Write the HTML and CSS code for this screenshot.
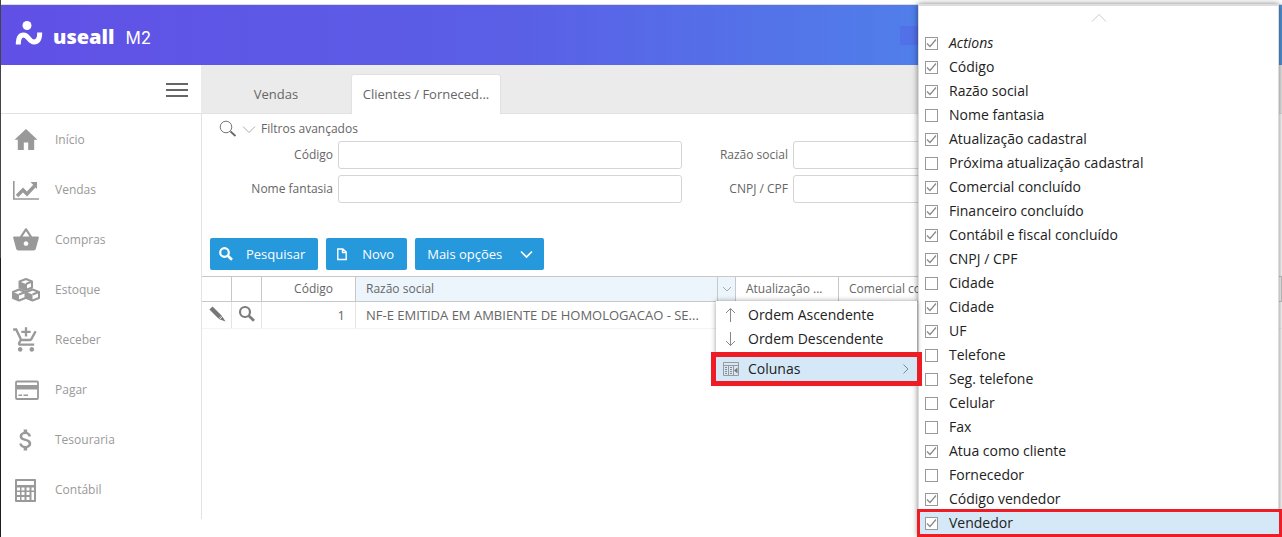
FILE: index.html
```html
<!DOCTYPE html>
<html lang="pt-BR">
<head>
<meta charset="utf-8">
<title>Useall M2 - Clientes / Fornecedores</title>
<link rel="stylesheet" href="styles.css">
</head>
<body>
<header class="topbar">
  <a class="brand" href="#">
    <svg class="brand-mark" viewBox="0 0 28 26" width="28" height="26" aria-hidden="true">
      <circle cx="12" cy="5.500" r="4.500" fill="#fff"/>
      <path d="M3.300 24.500c0-6 1.700-9.500 5.200-9.500 5 0 5.500 7 10.500 7 4 0 5.700-3 5.700-9.500" fill="none" stroke="#fff" stroke-width="5"/>
    </svg>
    <span class="brand-name">useall</span>
    <span class="brand-edition">M2</span>
  </a>
  <button class="topbar-menu" type="button" aria-label="Opções"></button>
</header>

<div class="shell">
  <aside class="sidebar">
    <div class="sidebar-head">
      <button class="toggle" type="button" aria-label="Menu"><span></span><span></span><span></span></button>
    </div>
    <nav class="nav">
      <a href="#"><svg viewBox="0 0 28 28"><path fill="currentColor" d="M14 3 2.500 13.800h3.300V24h6v-7.500h4.400V24h6V13.800h3.300z"/></svg>Início</a>
      <a href="#"><svg viewBox="0 0 28 28"><path fill="none" stroke="currentColor" stroke-width="1.600" d="M1.800 5v18H27"/><path fill="none" stroke="currentColor" stroke-width="3.400" d="M5 20l6-6 4 4 7.500-8"/><path fill="currentColor" d="M18.500 6H25v7z"/></svg>Vendas</a>
      <a href="#"><svg viewBox="0 0 24 24"><path fill="currentColor" d="M17.210 9l-4.380-6.560c-.190-.280-.510-.420-.830-.420-.320 0-.640.140-.830.430L6.790 9H2c-.550 0-1 .450-1 1 0 .090.010.180.040.270l2.540 9.270c.230.840 1 1.460 1.920 1.460h13c.920 0 1.690-.620 1.930-1.460l2.540-9.270L23 10c0-.550-.450-1-1-1h-4.790zM9 9l3-4.400L15 9H9zm3 8c-1.100 0-2-.900-2-2s.900-2 2-2 2 .900 2 2-.900 2-2 2z"/></svg>Compras</a>
      <a href="#"><svg viewBox="0 0 28 28"><g fill="#fff" stroke="currentColor" stroke-width="2" stroke-linejoin="round"><path d="M7.500 5.500 14 3l6 2.500v6L14 14l-6.500-2.500z"/><path d="M1 16l6-2.500 6.500 2.500v6L7 24.500 1 22z"/><path d="M14.500 16l6-2.500L27 16v6l-6.500 2.500-6-2.500z"/></g><path fill="currentColor" d="M7.500 5.500 14 8v6l-6.500-2.500zM1 16l6 2.500v6L1 22zM14.500 16l6 2.500v6l-6-2.500z"/><path fill="none" stroke="currentColor" stroke-width="2" d="M14 8v6M7 18.500l6.500-2.500M20.500 18.500 27 16M14 8l6-2.500"/></svg>Estoque</a>
      <a href="#"><svg viewBox="0 0 24 24"><path fill="currentColor" d="M11 9h2V6h3V4h-3V1h-2v3H8v2h3v3zm-4 9c-1.100 0-1.990.900-1.990 2S5.900 22 7 22s2-.900 2-2-.900-2-2-2zm10 0c-1.100 0-1.990.900-1.990 2s.890 2 1.990 2 2-.900 2-2-.900-2-2-2zm-9.830-3.250l.030-.120.900-1.630h7.450c.750 0 1.410-.410 1.750-1.030l3.860-7.010L19.420 4h-.010l-1.100 2-2.760 5H8.530l-.130-.270L6.160 6l-.950-2-.940-2H1v2h2l3.600 7.590-1.350 2.450c-.160.280-.250.610-.250.960 0 1.100.900 2 2 2h12v-2H7.420c-.130 0-.250-.110-.250-.250z"/></svg>Receber</a>
      <a href="#"><svg viewBox="0 0 28 28"><rect x="4" y="5.500" width="22" height="17.500" rx="1" fill="none" stroke="currentColor" stroke-width="1.800"/><path fill="currentColor" d="M4 9h22v4.500H4zM6.500 18.500h3.500v1.500H6.500zM11.500 18.500H16v1.500h-4.500z"/></svg>Pagar</a>
      <a href="#"><svg viewBox="0 0 24 24"><path fill="currentColor" d="M11.800 10.900c-2.270-.590-3-1.200-3-2.150 0-1.090 1.010-1.850 2.700-1.850 1.780 0 2.440.850 2.500 2.100h2.210c-.070-1.720-1.120-3.300-3.210-3.810V3h-3v2.160c-1.940.420-3.500 1.680-3.500 3.610 0 2.310 1.910 3.460 4.700 4.130 2.500.600 3 1.480 3 2.410 0 .690-.490 1.790-2.700 1.790-2.060 0-2.870-.920-2.980-2.100h-2.200c.120 2.190 1.760 3.420 3.680 3.830V21h3v-2.150c1.950-.370 3.500-1.500 3.500-3.550 0-2.840-2.430-3.810-4.700-4.400z"/></svg>Tesouraria</a>
      <a href="#"><svg viewBox="0 0 28 28"><path fill="currentColor" fill-rule="evenodd" d="M4 3h19q1 0 1 1v21q0 1-1 1H4q-1 0-1-1V4q0-1 1-1zm1 2v4h17V5zm0 6.500v3h3v-3zm4.500 0v3h3v-3zm5 0v3h3v-3zm5 0v3H22v-3zM5 16v3h3v-3zm4.500 0v3h3v-3zm5 0v3h3v-3zm5 0v8H22v-8zM5 21v3h3v-3zm4.500 0v3h3v-3zm5 0v3h3v-3z"/></svg>Contábil</a>
    </nav>
  </aside>

  <main class="main">
    <div class="tabs" role="tablist">
      <button class="tab" role="tab" type="button">Vendas</button>
      <button class="tab active" role="tab" type="button" aria-selected="true">Clientes / Forneced...</button>
    </div>

    <section class="content">
      <div class="filters-head">
        <svg width="18" height="18" viewBox="0 0 18 18"><circle cx="7" cy="7" r="5.800" fill="none" stroke="#777"/><path d="M11.500 11.500l5 4.500" stroke="#666" stroke-width="1.700"/></svg>
        <svg width="14" height="18" viewBox="0 0 14 18"><path d="M1 6.500l6 6 6-6" fill="none" stroke="#aaa"/></svg>
        <span>Filtros avançados</span>
      </div>
      <form class="filters">
        <label for="codigo">Código</label><input id="codigo" type="text">
        <label for="razao">Razão social</label><input id="razao" type="text">
        <label for="fantasia">Nome fantasia</label><input id="fantasia" type="text">
        <label for="cnpj">CNPJ / CPF</label><input id="cnpj" type="text">
      </form>

      <div class="actions">
        <button class="btn" type="button"><svg width="16" height="16" viewBox="0 0 16 16"><circle cx="6.500" cy="6.500" r="4.300" fill="none" stroke="#fff" stroke-width="2.200"/><path d="M9.800 9.800l4.200 4" stroke="#fff" stroke-width="2.600"/></svg>Pesquisar</button>
        <button class="btn" type="button"><svg width="16" height="16" viewBox="0 0 16 16"><path d="M3.800 3h5L12.200 6v7.500H3.800zM8.500 3v3.500h3.500" fill="none" stroke="#fff" stroke-width="1.400"/></svg>Novo</button>
        <button class="btn more-options" type="button">Mais opções<svg width="16" height="16" viewBox="0 0 16 16"><path d="M3 5.500l5.500 5.500L14 5.500" fill="none" stroke="#fff" stroke-width="1.700"/></svg></button>
      </div>

      <table class="grid">
        <colgroup><col class="c-icon"><col class="c-icon"><col class="c-code"><col class="c-name"><col class="c-update"><col></colgroup>
        <thead>
          <tr>
            <th></th><th></th><th class="num">Código</th>
            <th class="sorted">
              <div class="th-inner">
                <span>Razão social</span>
                <button class="trigger" type="button" aria-label="Menu da coluna"><svg width="10" height="8" viewBox="0 0 10 8"><path d="M1 2l4 4 4-4" fill="none" stroke="#aaa"/></svg></button>
              </div>
              <div class="menu" role="menu">
                <button type="button" role="menuitem"><svg width="16" height="16" viewBox="0 0 16 16"><path d="M7.500 15V1.500M3 6l4.500-4.500L12 6" fill="none" stroke="#888"/></svg>Ordem Ascendente</button>
                <button type="button" role="menuitem"><svg width="16" height="16" viewBox="0 0 16 16"><path d="M7.500 1v13.500M3 10l4.500 4.500L12 10" fill="none" stroke="#888"/></svg>Ordem Descendente</button>
                <hr>
                <button class="marked" type="button" role="menuitem"><svg width="16" height="16" viewBox="0 0 16 16"><path d="M.5 1.500h15v13H.5zM.5 4.500h15M5.500 4.500v10M10.500 4.500v10" fill="none" stroke="#999"/><path d="M2 6.500h2M2 8.500h2M2 10.500h2M2 12.500h2M7 6.500h2M7 8.500h2M7 10.500h2M7 12.500h2" stroke="#888"/><path d="M14.500 6.500v6l-3.500-3z" fill="#777"/></svg>Colunas<svg class="more" width="8" height="12" viewBox="0 0 8 12"><path d="M1.500 1.500 6 6l-4.500 4.500" fill="none" stroke="#888"/></svg></button>
              </div>
            </th>
            <th>Atualização ...</th><th>Comercial concluído</th>
          </tr>
        </thead>
        <tbody>
          <tr>
            <td class="tool"><button type="button" aria-label="Editar"><svg width="20" height="20" viewBox="0 0 20 20"><path d="M4 4l9 9" stroke="#777" stroke-width="4.500"/><path d="M14.800 11.500l3.700 6-7-2.500z" fill="#777"/><path d="M12.500 15.500l3.500-3.500" stroke="#fff" stroke-width=".8"/></svg></button></td>
            <td class="tool"><button type="button" aria-label="Visualizar"><svg width="20" height="20" viewBox="0 0 20 20"><circle cx="8" cy="8" r="5" fill="none" stroke="#7d7d7d" stroke-width="2.200"/><path d="M11.800 11.800l5.200 5" stroke="#7d7d7d" stroke-width="2.800"/></svg></button></td>
            <td class="num">1</td>
            <td class="name">NF-E EMITIDA EM AMBIENTE DE HOMOLOGACAO - SE...</td>
            <td></td><td></td>
          </tr>
        </tbody>
      </table>
    </section>
  </main>
</div>

<div class="columns">
  <svg class="scroll-up" width="16" height="10" viewBox="0 0 16 10"><path d="M1 8.500l7-7 7 7" fill="none" stroke="#ccc"/></svg>
  <label><input type="checkbox" checked><em>Actions</em></label>
  <label><input type="checkbox" checked>Código</label>
  <label><input type="checkbox" checked>Razão social</label>
  <label><input type="checkbox">Nome fantasia</label>
  <label><input type="checkbox" checked>Atualização cadastral</label>
  <label><input type="checkbox">Próxima atualização cadastral</label>
  <label><input type="checkbox" checked>Comercial concluído</label>
  <label><input type="checkbox" checked>Financeiro concluído</label>
  <label><input type="checkbox" checked>Contábil e fiscal concluído</label>
  <label><input type="checkbox" checked>CNPJ / CPF</label>
  <label><input type="checkbox">Cidade</label>
  <label><input type="checkbox" checked>Cidade</label>
  <label><input type="checkbox" checked>UF</label>
  <label><input type="checkbox">Telefone</label>
  <label><input type="checkbox">Seg. telefone</label>
  <label><input type="checkbox">Celular</label>
  <label><input type="checkbox">Fax</label>
  <label><input type="checkbox" checked>Atua como cliente</label>
  <label><input type="checkbox">Fornecedor</label>
  <label><input type="checkbox" checked>Código vendedor</label>
  <label class="marked"><input type="checkbox" checked>Vendedor</label>
</div>
</body>
</html>
```

FILE: styles.css
```css
* { box-sizing: border-box; }

body {
  margin: 0;
  padding: 4px 0 0 1px;
  min-height: 100vh;
  position: relative;
  overflow: hidden;
  font: 12px/16px "Open Sans", "Noto Sans", sans-serif;
  color: #666;
  background: linear-gradient(#444 0 48%, #1c1c1c 48%) left / 1px 100% no-repeat #fff;
}

button { font: inherit; color: inherit; border: 0; background: none; padding: 0; cursor: pointer; }
a { color: inherit; text-decoration: none; }
svg { flex: none; }

/* Top bar */
.topbar {
  display: flex;
  align-items: center;
  height: 61px;
  padding-left: 14px;
  border-top: 1px solid #ddd;
  background: linear-gradient(90deg, #6150e6, #5a5fe6 40%, #507fea 72%, #5295dc);
}
.brand { display: flex; align-items: center; color: #fff; }
.brand-mark { margin-bottom: 4px; }
.brand-name { padding-top: 4px; margin-left: 10px; font: 800 20px/24px "Open Sans", sans-serif; }
.brand-edition { padding-top: 5px; margin-left: 11px; font: 400 17px/24px Inter, sans-serif; }
.topbar-menu { width: 60px; height: 19px; margin: 0 322px 0 auto; background: #5270e8; }

.shell { display: flex; align-items: flex-start; }

/* Sidebar */
.sidebar { flex: none; width: 201px; border-right: 1px solid #e2e2e2; padding-bottom: 4px; }
.sidebar-head {
  display: flex;
  align-items: center;
  justify-content: flex-end;
  height: 49px;
  padding: 2px 13px 0 0;
  border-bottom: 1px solid #e2e2e2;
}
.toggle { display: grid; gap: 4px; }
.toggle span { width: 22px; height: 2px; background: #666; }
.nav { padding-top: 1px; }
.nav a { display: flex; align-items: center; gap: 15px; height: 50px; padding-left: 11px; color: #999; }
.nav svg { width: 28px; height: 28px; }

/* Tabs */
.main { flex: 1; min-width: 0; }
.tabs {
  display: flex;
  align-items: flex-end;
  height: 49px;
  margin-left: -1px;
  background: #ebebeb;
  border-bottom: 1px solid #e2e2e2;
}
.tab { width: 150px; height: 39px; font-size: 13px; }
.tab.active {
  height: 40px;
  margin-bottom: -1px;
  padding-bottom: 2px;
  background: #fff;
  border: 1px solid #e2e2e2;
  border-bottom: 0;
  border-radius: 3px 3px 0 0;
}

/* Filters */
.content { padding-top: 5px; }
.filters-head { display: flex; align-items: center; gap: 5px; height: 20px; padding-left: 17px; }
.filters {
  display: grid;
  grid-template-columns: 131px 1fr 101px 1fr;
  gap: 6px 5px;
  align-items: center;
  padding-right: 145px;
  margin-top: 2px;
}
.filters label { text-align: right; }
.filters input {
  width: 100%;
  min-width: 0;
  height: 28px;
  border: 1px solid #d5d5d5;
  border-radius: 3px;
  padding: 0 6px;
  font: inherit;
}

/* Toolbar */
.actions { display: flex; gap: 8px; padding: 35px 8px 6px; }
.btn {
  display: flex;
  align-items: center;
  gap: 12px;
  height: 32px;
  padding: 0 13px 0 8px;
  border-radius: 2px;
  background: #2698dc;
  color: #fff;
  font-size: 13px;
}
.btn.more-options { gap: 16px; padding: 0 10px 0 12px; }

/* Grid */
.grid { width: 100%; table-layout: fixed; border-collapse: separate; border-spacing: 0; }
.c-icon { width: 30px; }
.c-code { width: 94px; }
.c-name { width: 380px; }
.c-update { width: 103px; }
.grid th {
  height: 26px;
  padding: 0 10px;
  border: solid #c8c8c8;
  border-width: 1px 1px 1px 0;
  font-weight: 400;
  text-align: left;
  white-space: nowrap;
}
.grid .num { text-align: right; padding-right: 22px; }
.grid th.sorted { position: relative; padding-right: 0; background: #edf5fc; }
.th-inner { display: flex; justify-content: space-between; align-items: center; }
.trigger { display: grid; place-items: center; width: 18px; height: 24px; border-left: 1px solid #c8c8c8; }
.grid td {
  height: 27px;
  padding: 0 10px;
  border: solid #e4e4e4;
  border-width: 0 1px 1px 0;
  border-bottom-color: #f4f4f4;
  font-size: 13px;
}
.grid td.num { padding-right: 10px; }
.grid td.name { padding-right: 0; white-space: nowrap; }
.grid td:nth-child(n + 4) { border-right: 0; }
.grid td.tool { padding: 0 5px; }
.tool button { display: block; }

/* Column menu */
.menu {
  position: absolute;
  z-index: 3;
  top: 100%;
  left: calc(100% - 19px);
  width: 201px;
  padding: 2px 0;
  background: #fff;
  box-shadow: 0 0 5px rgba(0, 0, 0, .4);
}
.menu button {
  display: flex;
  align-items: center;
  gap: 9px;
  width: 100%;
  height: 24px;
  padding: 0 7px;
  color: #222;
  font-size: 14px;
}
.menu hr { margin: 1px 0 4px; border: 0; border-top: 1px solid #ddd; }
.menu .more { margin-left: auto; }
.menu .marked { background: #d5e8f7; outline: 5px solid #ee1c25; }

/* Column chooser */
.columns {
  position: absolute;
  z-index: 2;
  top: 4px;
  right: 3px;
  width: 361px;
  min-height: 533px;
  padding-bottom: 2px;
  border: solid #ddd;
  border-width: 2px 1px 0;
  background: #fff;
  box-shadow: 0 0 6px rgba(0, 0, 0, .5);
}
.scroll-up { display: block; margin: 7px auto 8px; }
.columns label {
  display: flex;
  align-items: center;
  gap: 11px;
  height: 24px;
  padding-left: 6px;
  color: #222;
  font-size: 14px;
}
.columns input {
  appearance: none;
  flex: none;
  width: 13px;
  height: 13px;
  margin: 0;
  border: 1px solid #999;
  background: #fff;
}
.columns input:checked {
  background: url("data:image/svg+xml,%3Csvg xmlns='http://www.w3.org/2000/svg' viewBox='0 0 11 11'%3E%3Cpath d='M1 5.500l3 3 6-7' fill='none' stroke='%23888' stroke-width='1.200'/%3E%3C/svg%3E") center / 11px 11px no-repeat #fff;
}
.columns .marked { margin-right: -2px; background: #d5e8f7; outline: 3px solid #ee1c25; outline-offset: -1px; }
```
